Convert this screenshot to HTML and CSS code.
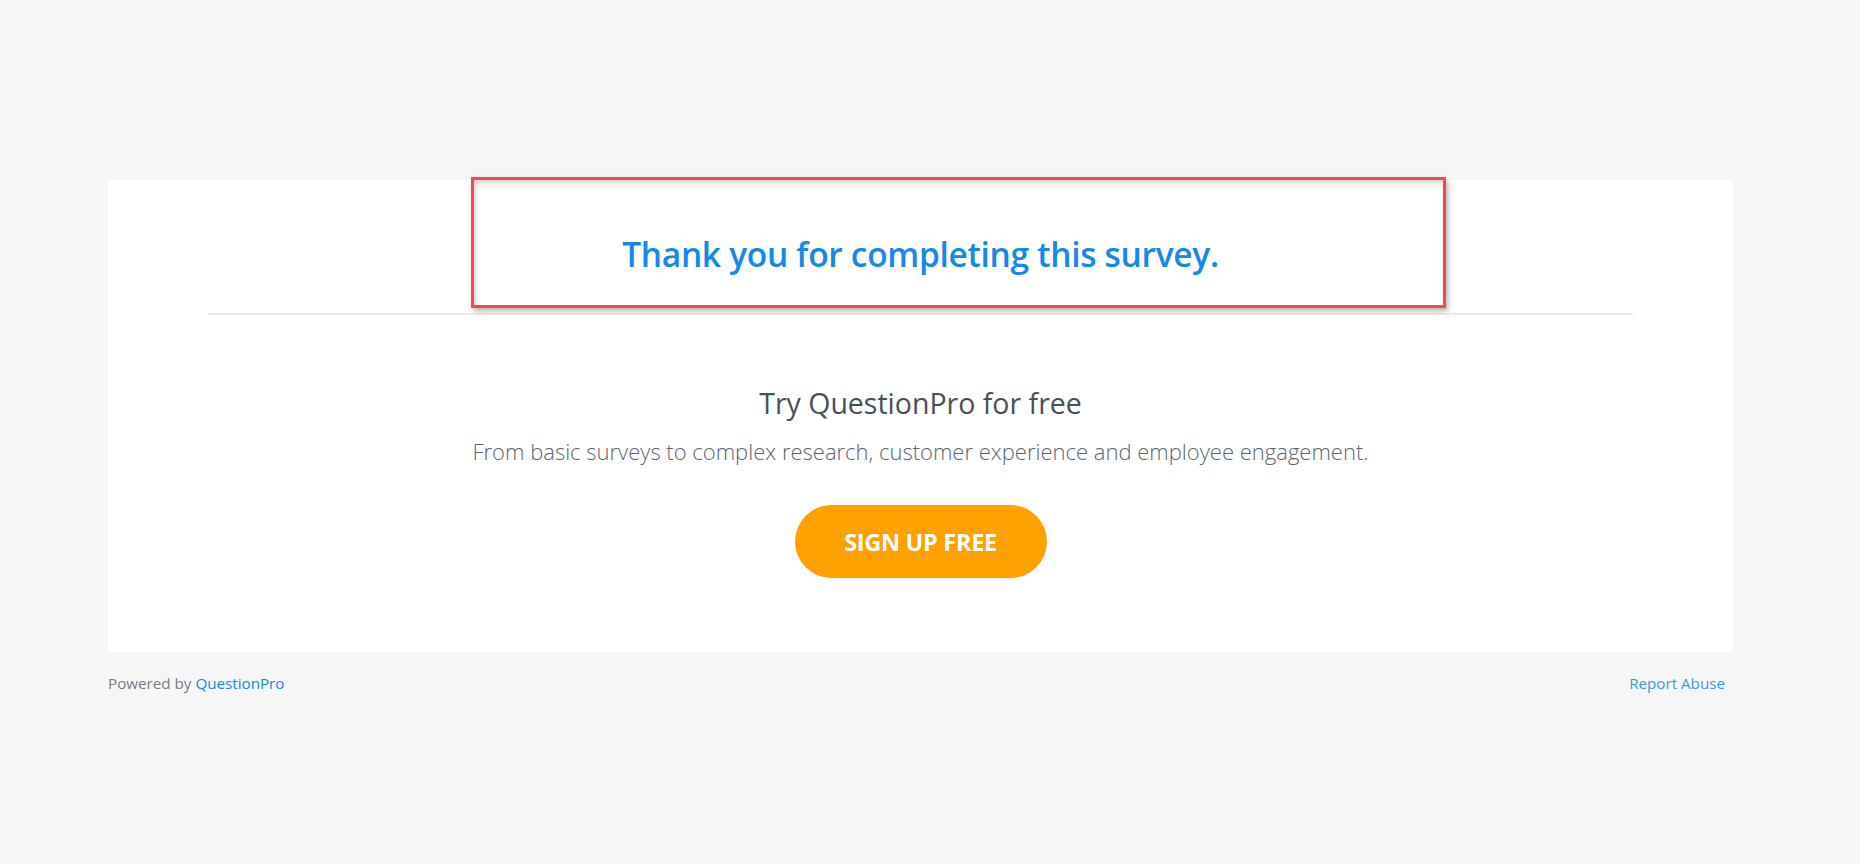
FILE: index.html
```html
<!DOCTYPE html>
<html lang="en">
<head>
<meta charset="utf-8">
<title>Thank you</title>
<link rel="stylesheet" href="styles.css">
</head>
<body>
<div class="page">
  <main class="card">
    <div class="highlight" aria-hidden="true"></div>
    <header class="card-head">
      <h1 class="thanks">Thank you for completing this survey.</h1>
    </header>
    <section class="promo">
      <h2 class="promo-title">Try QuestionPro for free</h2>
      <p class="promo-text">From basic surveys to complex research, customer experience and employee engagement.</p>
      <a class="signup" href="#">SIGN UP FREE</a>
    </section>
  </main>
  <footer class="footer">
    <span class="powered">Powered by <a class="brand" href="#">QuestionPro</a></span>
    <a class="report" href="#">Report Abuse</a>
  </footer>
</div>
</body>
</html>
```
FILE: styles.css
```css
html, body {
  margin: 0;
  padding: 0;
}
body {
  background: #f6f6f6;
  font-family: "Open Sans", "Noto Sans", sans-serif;
  height: 864px;
  overflow: hidden;
}
.page {
  width: 1625px;
  margin-left: 108px;
  padding-top: 180px;
}
.card {
  position: relative;
  background: #ffffff;
  padding: 0 100px;
  height: 472px;
  box-sizing: border-box;
}
.highlight {
  position: absolute;
  left: 363px;
  top: -3px;
  width: 975px;
  height: 131px;
  box-sizing: border-box;
  border: 3px solid #f24a4a;
  box-shadow: 2px 3px 5px rgba(0, 0, 0, 0.3), inset 2px 3px 5px rgba(0, 0, 0, 0.18);
  pointer-events: none;
  z-index: 2;
}
.card-head {
  border-bottom: 2px solid #ebebeb;
  padding-top: 48px;
  height: 135px;
  box-sizing: border-box;
  text-align: center;
}
.thanks {
  margin: 0;
  font-size: 33.5px;
  line-height: 52px;
  font-weight: 600;
  color: #1787e8;
  letter-spacing: -0.3px;
}
.promo {
  text-align: center;
  padding-top: 70px;
}
.promo-title {
  margin: 0;
  font-size: 28.5px;
  line-height: 36px;
  font-weight: 400;
  color: #4a5059;
}
.promo-text {
  margin: 16px 0 0;
  font-size: 22px;
  line-height: 28px;
  font-weight: 300;
  color: #5d6670;
}
.signup {
  display: inline-flex;
  align-items: center;
  justify-content: center;
  margin-top: 40px;
  width: 252px;
  height: 73px;
  border-radius: 37px;
  background: #ffa100;
  color: #ffffff;
  font-size: 23.5px;
  font-weight: 700;
  text-decoration: none;
  letter-spacing: -0.3px;
}
.footer {
  display: flex;
  justify-content: space-between;
  align-items: center;
  padding: 20px 8px 0 0;
  font-size: 15.2px;
  line-height: 22px;
}
.powered {
  color: #777d85;
}
.brand {
  color: #1787e8;
  text-decoration: none;
}
.report {
  color: #3a99e8;
  text-decoration: none;
}
```
